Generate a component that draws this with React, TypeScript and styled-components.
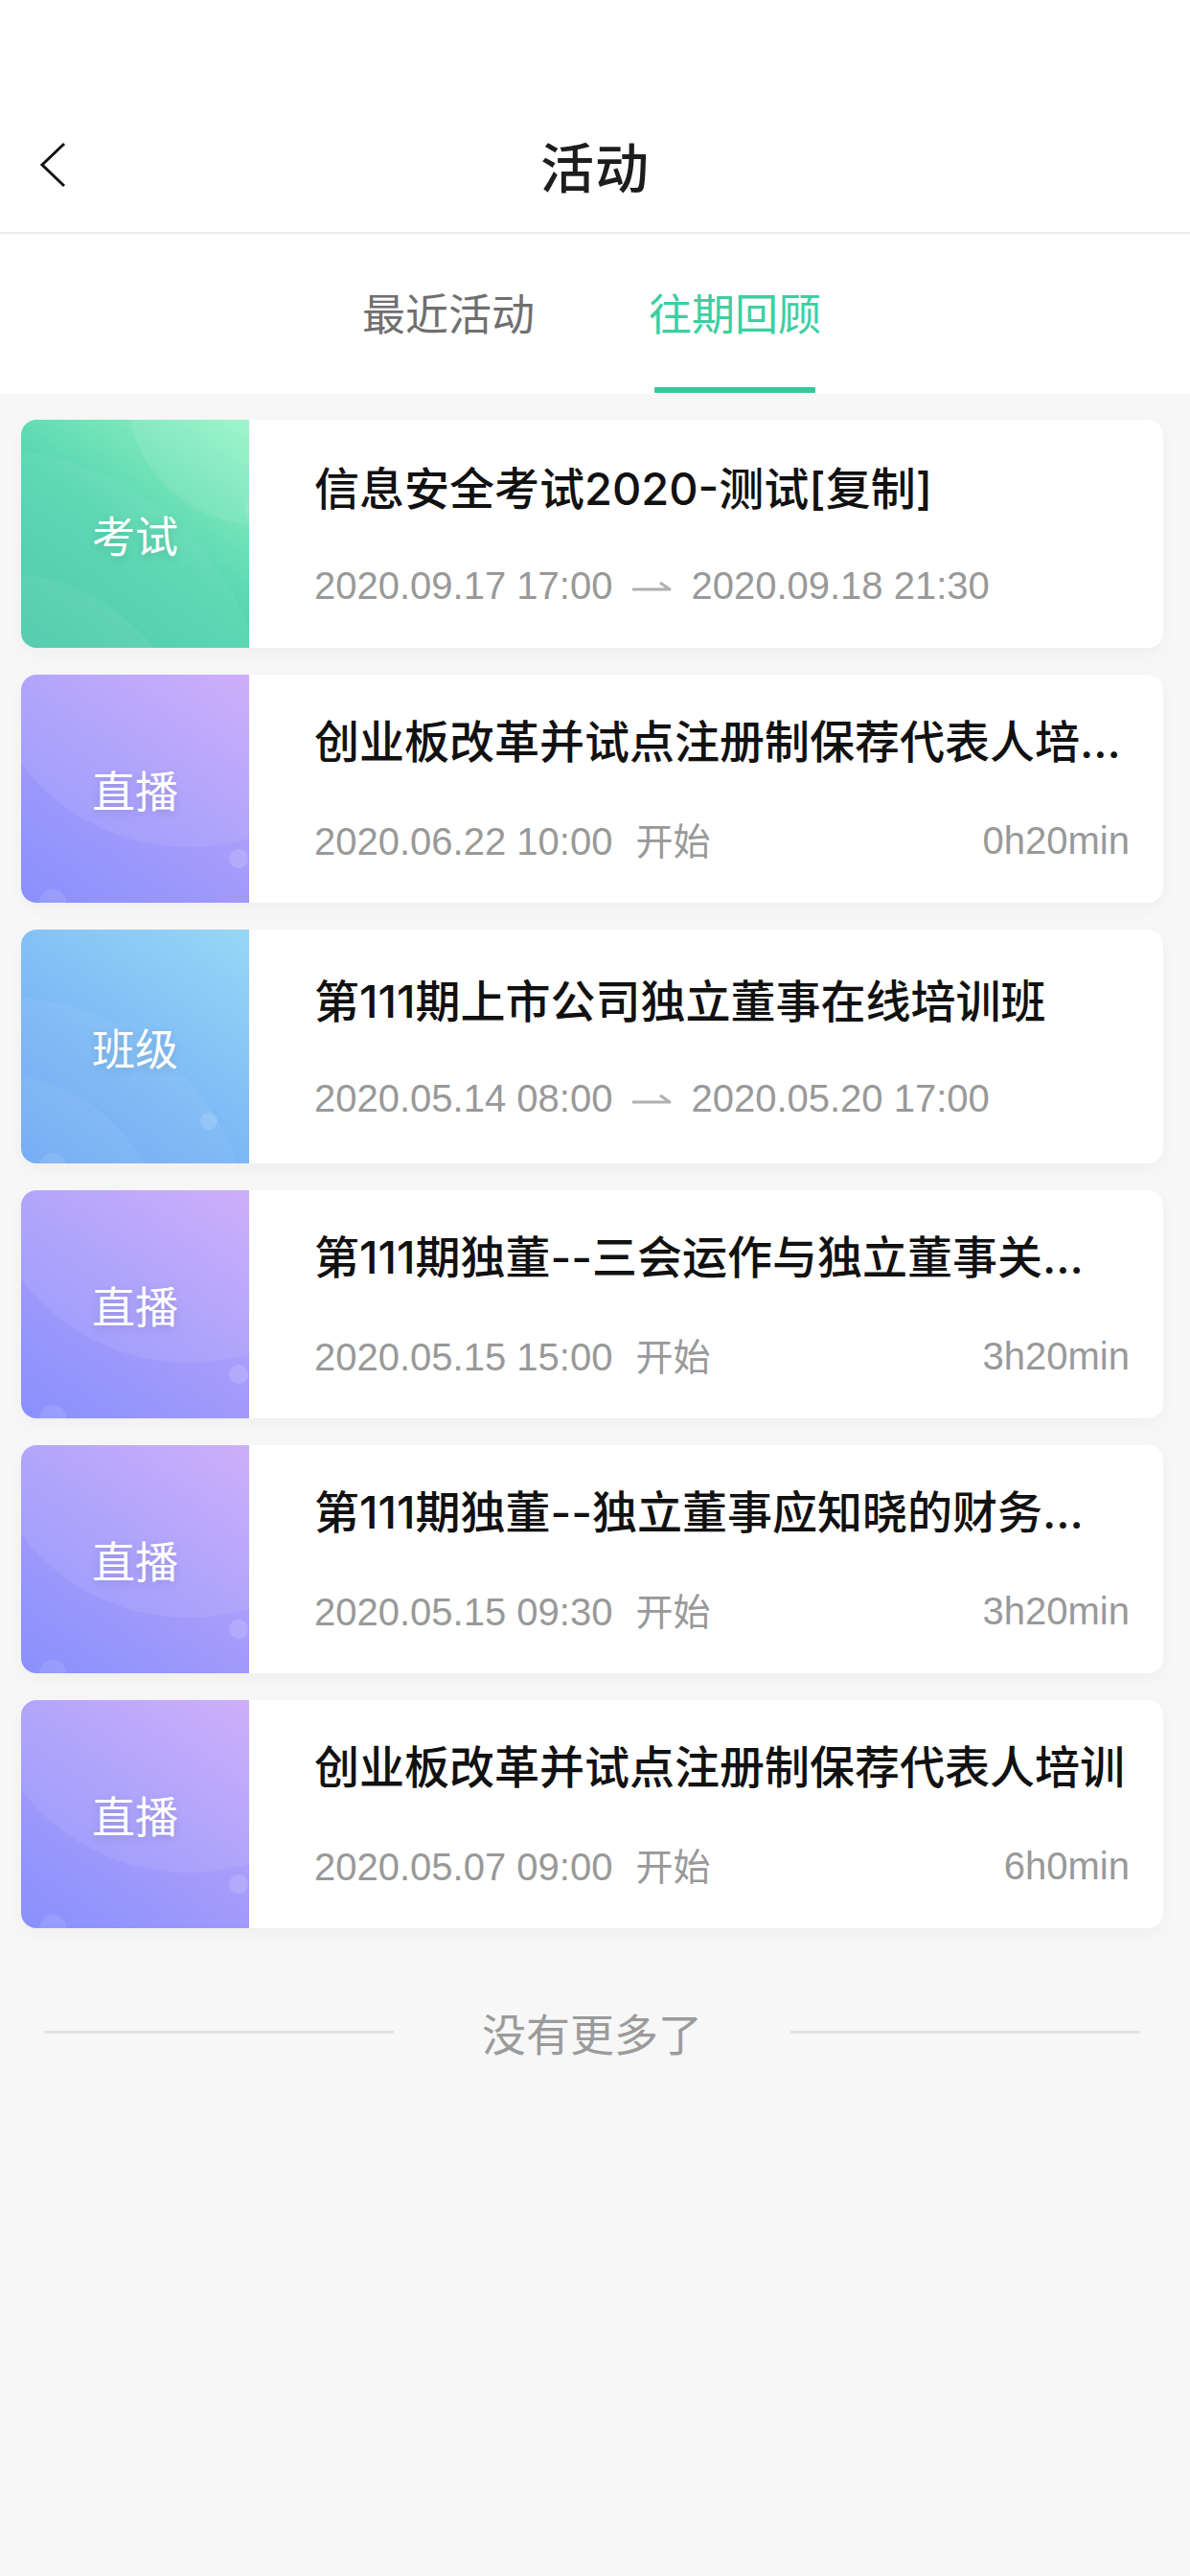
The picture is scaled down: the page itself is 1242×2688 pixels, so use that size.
import React from 'react';
import styled, {createGlobalStyle} from 'styled-components';

const GlobalStyle = createGlobalStyle`
  html, body {
    margin: 0;
    padding: 0;
    background: #f7f7f7;
  }
  body {
    font-family: "Liberation Sans", "Noto Sans CJK SC", sans-serif;
  }
`;

type Kind = 'exam' | 'live' | 'class';

type Activity = {
  id: number;
  kind: Kind;
  title: string;
  start: string;
  end?: string;
  duration?: string;
};

const activities: Activity[] = [
  {id: 1, kind: 'exam', title: '信息安全考试2020-测试[复制]', start: '2020.09.17 17:00', end: '2020.09.18 21:30'},
  {id: 2, kind: 'live', title: '创业板改革并试点注册制保荐代表人培...', start: '2020.06.22 10:00', duration: '0h20min'},
  {id: 3, kind: 'class', title: '第111期上市公司独立董事在线培训班', start: '2020.05.14 08:00', end: '2020.05.20 17:00'},
  {id: 4, kind: 'live', title: '第111期独董--三会运作与独立董事关...', start: '2020.05.15 15:00', duration: '3h20min'},
  {id: 5, kind: 'live', title: '第111期独董--独立董事应知晓的财务...', start: '2020.05.15 09:30', duration: '3h20min'},
  {id: 6, kind: 'live', title: '创业板改革并试点注册制保荐代表人培训', start: '2020.05.07 09:00', duration: '6h0min'},
];

const kindName: Record<Kind, string> = {
  exam: '考试',
  live: '直播',
  class: '班级',
};

const kindGradient: Record<Kind, string> = {
  exam: 'linear-gradient(35deg, #45c8a6 0%, #58d6b0 50%, #98f5c8 100%)',
  live: 'linear-gradient(35deg, #8990fc 0%, #a69cfb 50%, #caa8fa 100%)',
  class: 'linear-gradient(35deg, #68a5f4 0%, #80bdf5 50%, #96d8f6 100%)',
};

const Page = styled.div`
  min-height: 2688px;
  background: #f7f7f7;
  display: flex;
  flex-direction: column;
`;

const Header = styled.header`
  background: #ffffff;
  padding-top: 100px;
`;

const NavBar = styled.div`
  height: 142px;
  display: grid;
  grid-template-columns: 1fr auto 1fr;
  align-items: center;
  border-bottom: 2px solid #ededed;
`;

const BackButton = styled.button`
  justify-self: start;
  margin-left: 40px;
  padding: 0;
  border: none;
  background: none;
  display: flex;
  align-items: center;
`;

const NavTitle = styled.h1`
  margin: 0;
  font-family: "Noto Sans CJK SC", sans-serif;
  font-size: 56px;
  font-weight: 500;
  color: #1d1d1d;
  letter-spacing: 1px;
`;

const TabBar = styled.nav`
  height: 167px;
  display: flex;
  justify-content: center;
  gap: 119px;
  padding-right: 7px;
`;

const Tab = styled.div<{$active?: boolean}>`
  display: flex;
  flex-direction: column;
  align-items: center;
  padding-top: 56px;
  font-family: "Noto Sans CJK SC", sans-serif;
  font-size: 45px;
  line-height: 52px;
  color: ${p => (p.$active ? '#3ccfa1' : '#6f6f6f')};

  &::after {
    content: '';
    margin-top: auto;
    margin-bottom: 1px;
    width: 168px;
    height: 6px;
    border-radius: 1px;
    background: ${p => (p.$active ? '#34ca9b' : 'transparent')};
  }
`;

const List = styled.main`
  display: flex;
  flex-direction: column;
  gap: 28px;
  padding: 27px 28px 0 22px;
`;

const Card = styled.article<{$kind: Kind}>`
  height: ${p => (p.$kind === 'class' ? 244 : 238)}px;
  display: flex;
  background: #ffffff;
  border-radius: 16px;
  overflow: hidden;
  box-shadow: 0 6px 18px rgba(0, 0, 0, 0.035);
`;

const Badge = styled.div<{$kind: Kind}>`
  position: relative;
  width: 238px;
  flex-shrink: 0;
  display: flex;
  align-items: center;
  justify-content: center;
  background: ${p => kindGradient[p.$kind]};
  overflow: hidden;
`;

const BadgeArt = styled.svg`
  position: absolute;
  inset: 0;
`;

const BadgeText = styled.span`
  position: relative;
  font-family: "Noto Sans CJK SC", sans-serif;
  font-size: 45px;
  color: #ffffff;
  text-shadow: 0 3px 8px rgba(0, 0, 0, 0.12);
`;

const Body = styled.div`
  flex: 1;
  min-width: 0;
  display: flex;
  flex-direction: column;
  justify-content: center;
  gap: 51px;
  padding: 0 35px 0 68px;
`;

const Title = styled.h2`
  margin: 0;
  font-family: Inter, "Noto Sans CJK SC", sans-serif;
  font-size: 47px;
  font-weight: 500;
  line-height: 56px;
  color: #111111;
  white-space: nowrap;
  overflow: hidden;
`;

const Meta = styled.div`
  display: flex;
  align-items: center;
  justify-content: space-between;
  font-size: 40px;
  line-height: 44px;
  color: #999999;
`;

const Range = styled.div`
  display: flex;
  align-items: center;
  gap: 20px;
`;

const StartSuffix = styled.span`
  margin-left: 24px;
  font-family: "Noto Sans CJK SC", sans-serif;
  font-size: 39px;
`;

const Footer = styled.footer`
  display: flex;
  align-items: center;
  margin-top: 78px;
  padding: 0 52px 0 46px;
  gap: 92px;
`;

const FooterLine = styled.span`
  flex: 1;
  height: 3px;
  background: #e2e2e2;
`;

const FooterText = styled.span`
  font-family: "Noto Sans CJK SC", sans-serif;
  font-size: 46px;
  line-height: 60px;
  color: #9b9b9b;
`;

const BackIcon = () => (
  <svg width="30" height="50" viewBox="0 0 30 50">
    <polyline points="27,4 4,26 27,48" fill="none" stroke="#111" strokeWidth="3" />
  </svg>
);

const RangeArrow = () => (
  <svg width="42" height="14" viewBox="0 0 42 14">
    <path d="M1 11 H40 L30 4" fill="none" stroke="#b0b0b0" strokeWidth="3" strokeLinejoin="round" />
  </svg>
);

const Decoration: React.FC<{kind: Kind}> = ({kind}) => (
  <BadgeArt width="238" height="244" viewBox="0 0 238 244">
    {kind === 'exam' && (
      <g fill="#ffffff">
        <circle cx="250" cy="-30" r="140" opacity="0.08" />
        <circle cx="-40" cy="330" r="300" opacity="0.05" />
        <circle cx="-20" cy="360" r="200" opacity="0.05" />
        <circle cx="262" cy="95" r="28" opacity="0.08" />
      </g>
    )}
    {kind === 'live' && (
      <g fill="#ffffff">
        <circle cx="175" cy="-40" r="220" opacity="0.08" />
        <circle cx="227" cy="192" r="10" opacity="0.15" />
        <circle cx="262" cy="150" r="24" opacity="0.1" />
        <circle cx="33" cy="238" r="14" opacity="0.1" />
      </g>
    )}
    {kind === 'class' && (
      <g fill="#ffffff">
        <circle cx="-20" cy="330" r="260" opacity="0.05" />
        <circle cx="-30" cy="330" r="180" opacity="0.05" />
        <circle cx="196" cy="200" r="9" opacity="0.15" />
        <circle cx="262" cy="160" r="24" opacity="0.1" />
        <circle cx="33" cy="247" r="14" opacity="0.1" />
      </g>
    )}
  </BadgeArt>
);

const ActivityCard: React.FC<{item: Activity}> = ({item}) => (
  <Card $kind={item.kind}>
    <Badge $kind={item.kind}>
      <Decoration kind={item.kind} />
      <BadgeText>{kindName[item.kind]}</BadgeText>
    </Badge>
    <Body>
      <Title>{item.title}</Title>
      <Meta>
        {item.end ? (
          <Range>
            <span>{item.start}</span>
            <RangeArrow />
            <span>{item.end}</span>
          </Range>
        ) : (
          <>
            <span>
              {item.start}
              <StartSuffix>开始</StartSuffix>
            </span>
            <span>{item.duration}</span>
          </>
        )}
      </Meta>
    </Body>
  </Card>
);

const App: React.FC = () => {
  return (
    <Page>
      <GlobalStyle />
      <Header>
        <NavBar>
          <BackButton aria-label="返回">
            <BackIcon />
          </BackButton>
          <NavTitle>活动</NavTitle>
          <span />
        </NavBar>
        <TabBar>
          <Tab>最近活动</Tab>
          <Tab $active>往期回顾</Tab>
        </TabBar>
      </Header>

      <List>
        {activities.map(item => (
          <ActivityCard key={item.id} item={item} />
        ))}
      </List>

      <Footer>
        <FooterLine />
        <FooterText>没有更多了</FooterText>
        <FooterLine />
      </Footer>
    </Page>
  );
};

export default App;
